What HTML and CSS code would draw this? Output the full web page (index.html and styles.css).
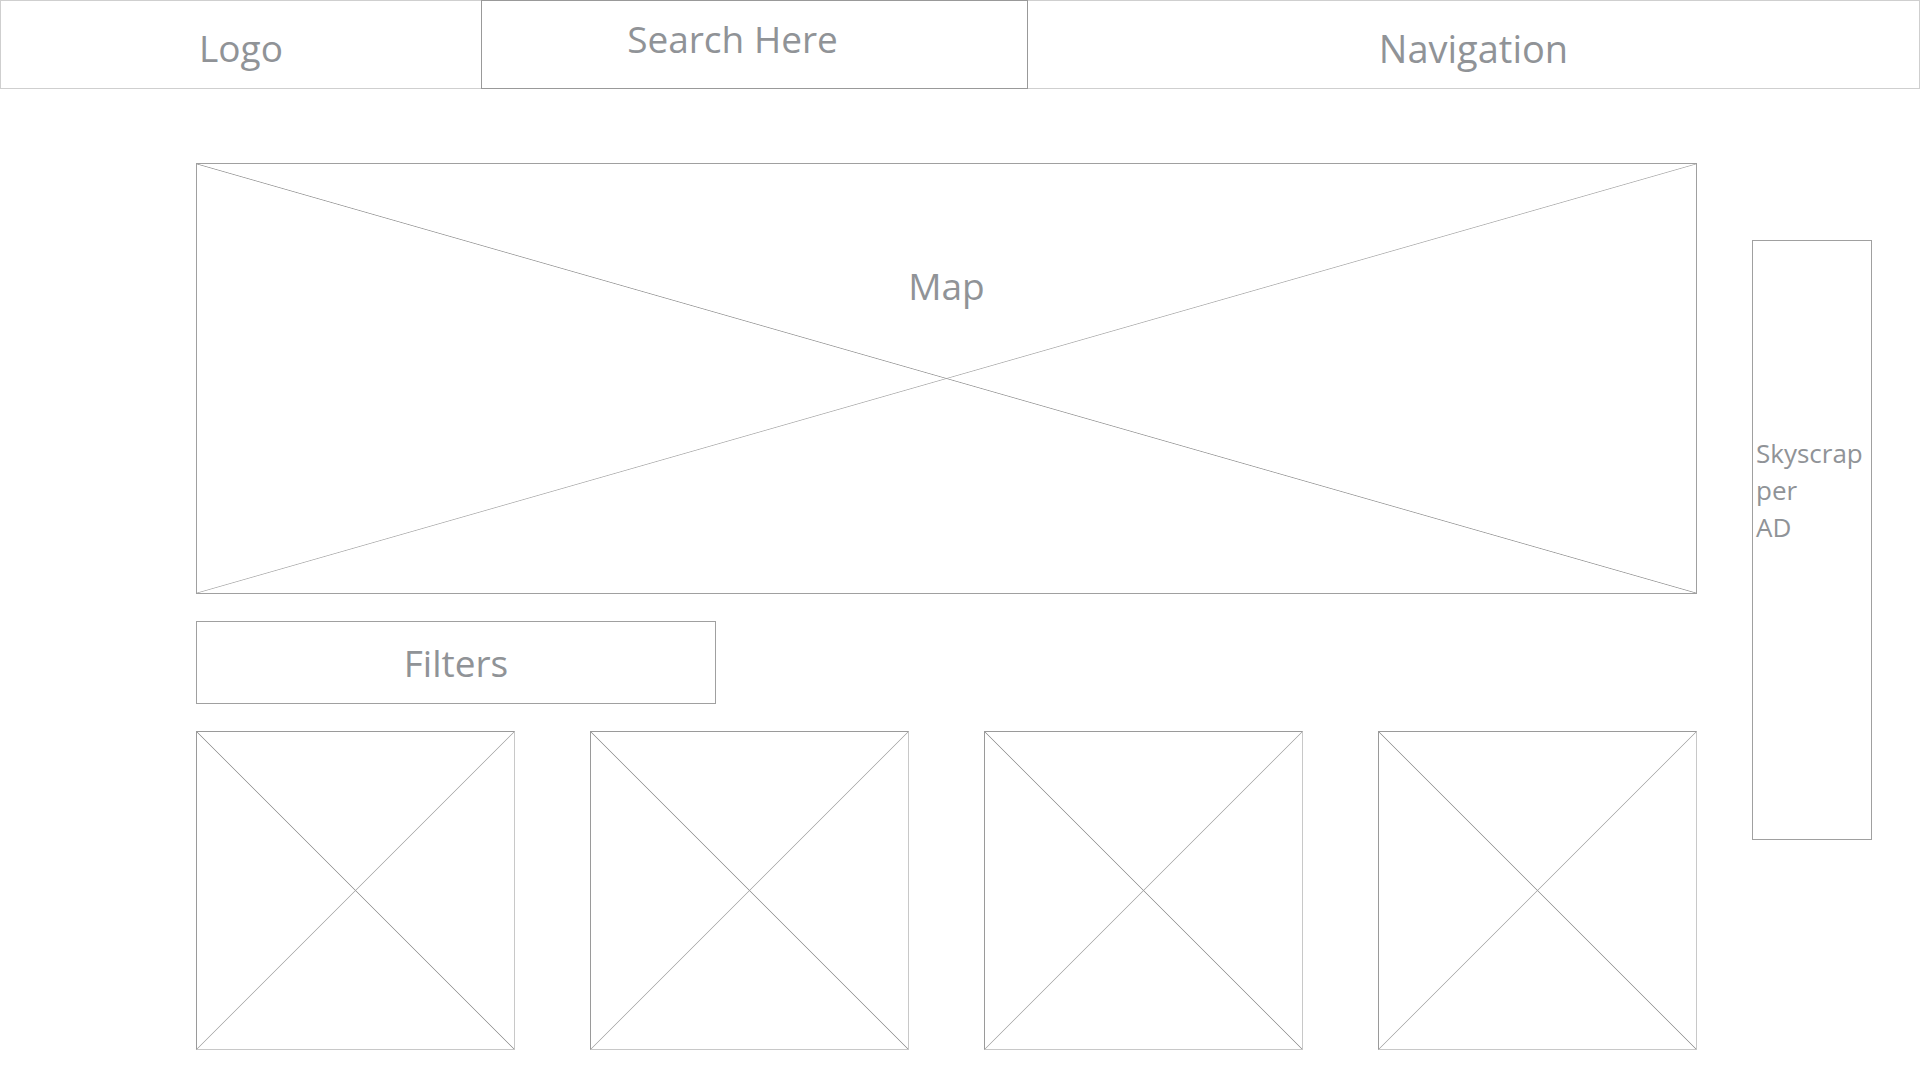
FILE: index.html
```html
<!DOCTYPE html>
<html lang="en">
<head>
  <meta charset="UTF-8" />
  <meta name="viewport" content="width=device-width, initial-scale=1.0"/>
  <title>Wireframe</title>
  <link rel="stylesheet" href="styles.css">
</head>
<body>
  <!-- header -->
  <header class="top-bar">
    <div class="logo-box">Logo</div>
    <div class="search-box">Search Here</div>
    <div class="nav-box">Navigation</div>
  </header>

  <!-- main area -->
  <div class="main">
    <div class="content">
      <div class="map-box cross">Map</div>
      <div class="filter-box">Filters</div>
      <div class="product-row">
        <div class="product cross"></div>
        <div class="product cross"></div>
        <div class="product cross"></div>
        <div class="product cross"></div>
      </div>
    </div>

    <!-- ad -->
    <div class="ad-box">Skyscrap<br>per<br>AD</div>
  </div>
</body>
</html>
```

FILE: styles.css
```css
body {
  margin: 0;
  font-family: 'Open Sans', 'Noto Sans', sans-serif;
  color: #909397;
  background: #fff;
}
.top-bar {
  display: flex;
  height: 89px;
}
.logo-box, .search-box, .nav-box {
  box-sizing: border-box;
  height: 89px;
  font-size: 37px;
  text-align: center;
  border: 1px solid #cfcfcf;
}
.logo-box {
  width: 481px;
  padding-top: 21px;
  border-right: none;
}
.search-box {
  width: 547px;
  padding-top: 12px;
  padding-right: 44px;
  border-color: #999;
}
.nav-box {
  flex: 1;
  padding-top: 21px;
  border-left: none;
  font-size: 38px;
}
.main {
  display: flex;
  align-items: flex-start;
  gap: 55px;
  padding: 74px 0 0 196px;
}
.content {
  width: 1501px;
  display: flex;
  flex-direction: column;
  gap: 27px;
}
.cross {
  background:
    linear-gradient(to top right, transparent calc(50% - 0.8px), #a0a0a0 50%, transparent calc(50% + 0.8px)),
    linear-gradient(to bottom right, transparent calc(50% - 0.8px), #b4b4b4 50%, transparent calc(50% + 0.8px));
}
.map-box {
  box-sizing: border-box;
  height: 431px;
  border: 1px solid #a0a0a0;
  padding-top: 96px;
  font-size: 37px;
  text-align: center;
}
.filter-box {
  box-sizing: border-box;
  width: 520px;
  height: 83px;
  border: 1px solid #a0a0a0;
  display: flex;
  align-items: center;
  justify-content: center;
  font-size: 37px;
}
.product-row {
  display: flex;
  justify-content: space-between;
}
.product {
  box-sizing: border-box;
  width: 319px;
  height: 319px;
  border: 1px solid;
  border-color: #9a9a9a #c8c8c8 #c8c8c8 #9a9a9a;
}
.ad-box {
  box-sizing: border-box;
  width: 120px;
  height: 600px;
  margin-top: 77px;
  border: 1px solid #a0a0a0;
  padding: 194px 0 0 3px;
  font-size: 26px;
  line-height: 37px;
}
```
